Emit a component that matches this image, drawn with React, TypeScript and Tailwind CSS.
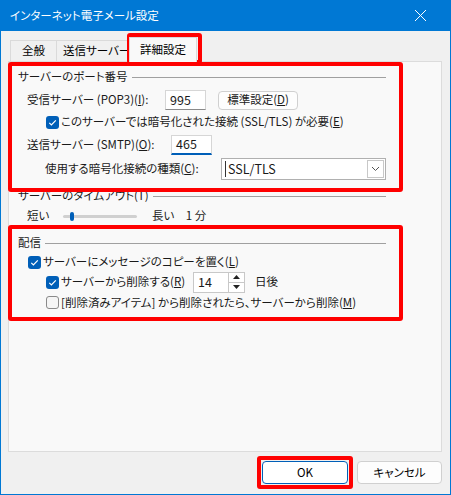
import React from "react";

const U = ({ c }: { c: string }) => <span className="underline">{c}</span>;

const Check = ({ on }: { on: boolean }) =>
  on ? (
    <span className="w-[13px] h-[13px] rounded-[3px] bg-[#005fb8] flex items-center justify-center shrink-0">
      <svg width="11" height="11" viewBox="0 0 11 11">
        <path d="M2.3 5.8 L4.4 7.9 L8.8 3.3" fill="none" stroke="#fff" strokeWidth="1.2" />
      </svg>
    </span>
  ) : (
    <span className="w-[13px] h-[13px] rounded-[3px] border border-[#8a8a8a] bg-[#f5f5f5] shrink-0" />
  );

const Legend = ({ children, cls }: { children: React.ReactNode; cls: string }) => (
  <div className={`flex items-center w-[368px] ${cls}`}>
    <span className="text-[#1a1a1a]">{children}</span>
    <div className="flex-1 h-px bg-[#a0a0a0] ml-[4px]" />
  </div>
);

const App = () => {
  return (
    <div className="relative w-[451px] h-[495px] bg-[#f0f0f0] border border-t-0 border-[#0078d4] flex flex-col text-[11.5px] text-black font-['Noto_Sans_CJK_JP',sans-serif] [font-feature-settings:'palt']">
      {/* Title bar */}
      <div className="h-[31px] bg-[#0078d4] -mx-px flex items-center justify-between pl-[10px] pr-[24px] text-white">
        <span>インターネット電子メール設定</span>
        <svg width="13" height="13" viewBox="0 0 13 13">
          <path d="M1 1 L12 12 M12 1 L1 12" stroke="#fff" strokeWidth="1" />
        </svg>
      </div>

      <div className="px-[7px]">
        {/* Tabs */}
        <div className="flex items-end h-[24px] mt-[6px] pl-[2px]">
          <div className="w-[47px] h-[21px] border border-b-0 border-[#dadada] bg-[#f0f0f0] flex items-center justify-center">全般</div>
          <div className="w-[72px] h-[21px] border border-l-0 border-b-0 border-[#dadada] bg-[#f0f0f0] flex items-center pl-[6px] whitespace-nowrap overflow-hidden">送信サーバー</div>
          <div className="w-[68px] h-[25px] -mb-px border border-b-0 border-[#dadada] bg-[#f9f9f9] relative z-10 flex items-center justify-center">詳細設定</div>
        </div>

        {/* Panel */}
        <div className="w-[434px] h-[391px] bg-[#f9f9f9] border border-[#dcdcdc] pl-[9px] pt-[4px] text-[#1a1a1a]">
          <Legend cls="h-[22px]">サーバーのポート番号</Legend>

          <div className="flex items-center h-[24px] pl-[9px]">
            <span className="w-[138px]">受信サーバー (POP3)(<U c="I" />):</span>
            <div className="w-[41px] h-[20px] bg-white border border-[#d6d6d6] border-b-[#8a8a8a] flex items-center pl-[4px] text-[12.5px]">995</div>
            <div className="ml-[12px] w-[80px] h-[19px] bg-[#fdfdfd] border border-[#d0d0d0] rounded-[4px] flex items-center justify-center">
              標準設定(<U c="D" />)
            </div>
          </div>

          <div className="flex items-center h-[20px] pl-[28px]">
            <Check on />
            <span className="ml-[2px]">このサーバーでは暗号化された接続 (SSL/TLS) が必要(<U c="E" />)</span>
          </div>

          <div className="flex items-center h-[26px] pl-[9px]">
            <span className="w-[144px]">送信サーバー (SMTP)(<U c="O" />):</span>
            <div className="w-[41px] h-[20px] bg-white border border-[#d6d6d6] border-b-2 border-b-[#005fb8] flex items-center pl-[4px] text-[12.5px]">465</div>
          </div>

          <div className="flex items-center h-[22px] pl-[27px]">
            <span className="w-[176px]">使用する暗号化接続の種類(<U c="C" />):</span>
            <div className="w-[165px] h-[22px] bg-white border border-[#b0b0b0] flex items-center pl-[3px] pr-[1px]">
              <span className="w-px h-[16px] bg-[#333] mr-[2px]" />
              <span className="flex-1 text-[12.5px]">SSL/TLS</span>
              <span className="w-[17px] h-[18px] border border-[#c8c8c8] flex items-center justify-center">
                <svg width="9" height="6" viewBox="0 0 9 6">
                  <path d="M1 1 L4.5 4.5 L8 1" fill="none" stroke="#555" strokeWidth="1" />
                </svg>
              </span>
            </div>
          </div>

          <Legend cls="h-[20px] mt-[6px]">サーバーのタイムアウト(T)</Legend>

          <div className="flex items-center h-[20px] pl-[9px]">
            <span className="w-[36px]">短い</span>
            <div className="relative w-[74px] h-[3px] bg-[#d0d0d0] rounded-full">
              <span className="absolute left-[7px] -top-[3px] w-[4px] h-[9px] rounded-[2px] bg-[#005fb8]" />
            </div>
            <span className="ml-[15px]">長い　1 分</span>
          </div>

          <Legend cls="h-[20px] mt-[7px]">配信</Legend>

          <div className="flex items-center h-[18px] pl-[10px]">
            <Check on />
            <span className="ml-[2px]">サーバーにメッセージのコピーを置く(<U c="L" />)</span>
          </div>

          <div className="flex items-center h-[22px] pl-[28px]">
            <Check on />
            <span className="ml-[2px] w-[132px]">サーバーから削除する(<U c="R" />)</span>
            <div className="w-[52px] h-[21px] bg-white border border-[#c8c8c8] flex">
              <span className="flex-1 flex items-center pl-[4px] text-[12.5px]">14</span>
              <span className="w-[16px] border-l border-[#c8c8c8] flex flex-col">
                <span className="flex-1 flex items-center justify-center border-b border-[#c8c8c8]">
                  <svg width="7" height="4" viewBox="0 0 7 4"><path d="M0 4 L3.5 0 L7 4 Z" fill="#222" /></svg>
                </span>
                <span className="flex-1 flex items-center justify-center">
                  <svg width="7" height="4" viewBox="0 0 7 4"><path d="M0 0 L3.5 4 L7 0 Z" fill="#222" /></svg>
                </span>
              </span>
            </div>
            <span className="ml-[10px]">日後</span>
          </div>

          <div className="flex items-center h-[19px] pl-[28px]">
            <Check on={false} />
            <span className="ml-[2px]">[削除済みアイテム] から削除されたら、サーバーから削除(<U c="M" />)</span>
          </div>
        </div>

        {/* Buttons */}
        <div className="flex justify-end gap-[9px] mt-[9px] pr-[1px]">
          <div className="w-[86px] h-[23px] bg-white border border-[#005fb8] rounded-[4px] flex items-center justify-center">OK</div>
          <div className="w-[85px] h-[23px] bg-[#fdfdfd] border border-[#d0d0d0] rounded-[4px] flex items-center justify-center">キャンセル</div>
        </div>
      </div>

      {/* Red annotation frames */}
      <div className="absolute left-[126px] top-[33px] w-[75px] h-[31px] border-4 border-[#ff0000] rounded-[3px]" />
      <div className="absolute left-[7px] top-[62px] w-[395px] h-[130px] border-4 border-[#ff0000] rounded-[3px]" />
      <div className="absolute left-[7px] top-[225px] w-[395px] h-[96px] border-4 border-[#ff0000] rounded-[3px]" />
      <div className="absolute left-[256px] top-[456px] w-[96px] h-[33px] border-4 border-[#ff0000] rounded-[3px]" />
    </div>
  );
};

export default App;
